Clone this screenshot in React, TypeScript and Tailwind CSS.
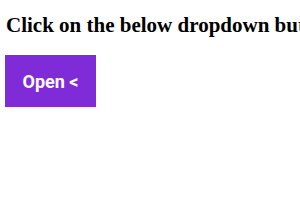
import React from 'react';

export default function App() {
  return (
    <div className="bg-white w-[300px] h-[210px] overflow-hidden px-[6px] pt-[13px]">
      <h3 className="whitespace-nowrap font-bold text-[21px] leading-[24px] text-black font-['Liberation_Serif',serif]">
        Click on the below dropdown button
      </h3>
      <button className="mt-[18px] -ml-[1px] w-[91px] h-[52px] bg-[#7f2bd7] text-white font-bold text-[18px] flex items-center justify-center font-['Roboto',sans-serif]">
        Open &lt;
      </button>
    </div>
  );
}
